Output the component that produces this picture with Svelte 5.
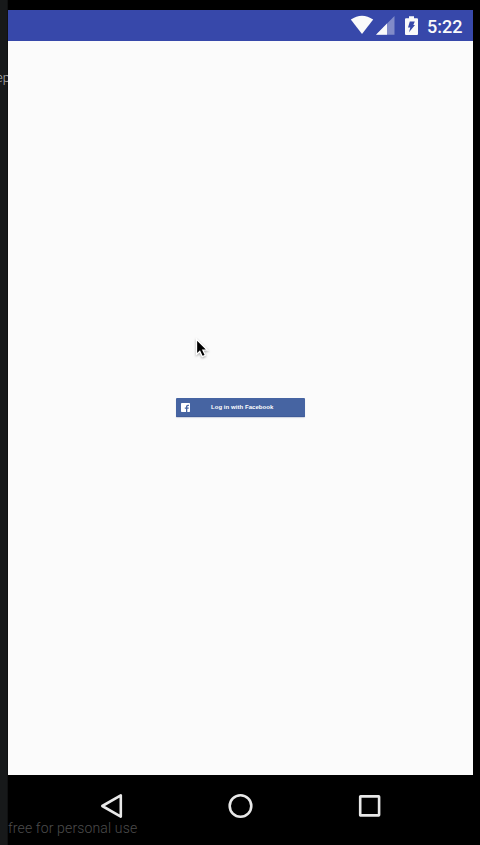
<script>
  const time = '5:22';
</script>

<div class="window">
  <aside><span>ep</span></aside>
  <main class="device">
    <header>
      <svg class="wifi" width="24" height="20" viewBox="0 0 24 20"><path d="M0.8 4.5Q12 -3.1 23.2 4.5L12 19Z" /></svg>
      <svg class="signal" width="19" height="19" viewBox="0 0 19 19"><path d="M0 18.7 18.5 0v18.7Z" opacity=".38" /><path d="M0 18.7 11 7.6v11.1Z" /></svg>
      <svg class="battery" width="13" height="20" viewBox="0 0 13 20"><path d="M4 0.3h5v1.9h3q1 0 1 1v14.7q0 1-1 1H1q-1 0-1-1V3.2q0-1 1-1h3Z" /><path class="bolt" d="M4.8 5.4h5L8.3 9H10L4 16.3 5.3 11.5H3Z" /></svg>
      <time>{time}</time>
    </header>
    <section class="screen">
      <button>
        <svg width="9" height="9" viewBox="0 0 9 9"><rect width="9" height="9" rx=".7" fill="#fff" /><path d="M5 9V5.7H3.8V4.4H5V3.5Q5 1.7 6.9 1.7h1v1.2h-.8q-.8 0-.8.8v.7h1.5l-.2 1.3H6.3V9Z" fill="#4664a2" /></svg>
        <span>Log in with Facebook</span>
      </button>
    </section>
    <footer>
      <nav>
        <svg width="24" height="26" viewBox="0 0 24 26"><path d="M2.3 13 20.8 2.4v21.2Z" /></svg>
        <svg width="26" height="26" viewBox="0 0 26 26"><ellipse cx="12.5" cy="13" rx="10.8" ry="10.7" /></svg>
        <svg width="24" height="26" viewBox="0 0 24 26"><rect x="2.2" y="3.4" width="18.9" height="19" rx=".4" /></svg>
      </nav>
      <p>free for personal use</p>
    </footer>
  </main>
  <svg class="cursor" width="16" height="22" viewBox="0 0 16 22"><path d="M1.5 1.2v15.2l3.3-3 2.5 5.3 3.1-1.4-2.5-5.1h4.6Z" fill="#000" stroke="#fff" stroke-width="1.3" /></svg>
</div>

<style>
  :global(body) { margin: 0; background: #000; }
  .window { position: relative; box-sizing: border-box; width: 480px; height: 845px; display: flex; overflow: hidden; background: #000; font-family: Roboto, sans-serif; }
  aside { width: 8px; flex-shrink: 0; overflow: hidden; background: #17191a; box-shadow: inset -1px 0 #101112; }
  aside span { display: block; width: 16px; margin: 70px 0 0 -4px; font: 300 13px/16px Roboto, sans-serif; color: #b4b4b4; }
  .device { width: 465px; height: 835px; padding-top: 10px; display: flex; flex-direction: column; }
  header { height: 31px; flex-shrink: 0; display: flex; align-items: flex-start; background: #3748aa; color: #fafafa; }
  header svg { fill: #fafafa; flex-shrink: 0; }
  .wifi { margin: 5px 0 0 342px; }
  .signal { margin: 6px 0 0 2px; }
  .battery { margin: 6px 0 0 10px; }
  .battery .bolt { fill: #3748aa; }
  time { margin: 5px 0 0 9px; font: 500 18px/23px Roboto, sans-serif; white-space: nowrap; }
  .screen { height: 734px; flex-shrink: 0; display: flex; justify-content: center; align-items: flex-start; background: #fbfbfb; }
  button { box-sizing: border-box; width: 129px; height: 19px; margin-top: 357px; padding: 0 5px; border: 0; border-radius: 1px; display: flex; align-items: center; background: #4664a2; box-shadow: inset 0 -1px #3f5b98, 0 1px 1px #ccd2df; color: #fff; }
  button svg { flex-shrink: 0; }
  button span { margin: 0 0 1px 21px; font: bold 6px/10px "Liberation Sans", sans-serif; letter-spacing: .05px; white-space: nowrap; }
  footer { height: 70px; background: #000; }
  nav { height: 26px; padding: 18px 91px 0 92px; display: flex; justify-content: space-between; }
  nav svg { fill: none; stroke: #e8e8e8; stroke-width: 2.6; stroke-linejoin: round; }
  p { margin: -1px 0 0; font: 300 14px/20px Roboto, sans-serif; letter-spacing: .15px; color: #4c4c4c; white-space: nowrap; }
  .cursor { position: absolute; left: 195px; top: 338px; filter: drop-shadow(0 1px 1px #0005); }
</style>
